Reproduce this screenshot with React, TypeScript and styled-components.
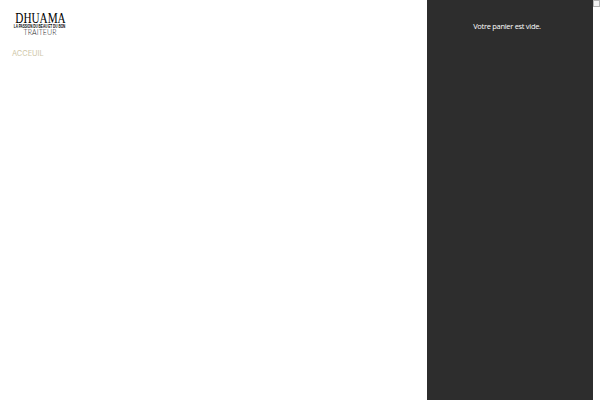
import React from 'react';
import styled, { createGlobalStyle } from 'styled-components';

const GlobalStyle = createGlobalStyle`
  html, body {
    margin: 0;
    padding: 0;
    background: #ffffff;
  }
`;

const Page = styled.div`
  display: flex;
  width: 600px;
  height: 400px;
  overflow: hidden;
  background: #ffffff;
`;

const Main = styled.div`
  flex: 0 0 427px;
  display: flex;
  flex-direction: column;
  align-items: flex-start;
  padding: 13px 0 0 12px;
  box-sizing: border-box;
`;

const Logo = styled.div`
  display: flex;
  flex-direction: column;
  align-items: center;
  width: 56px;
  color: #000000;
`;

const LogoName = styled.div`
  font-family: 'Liberation Serif', serif;
  font-size: 14px;
  line-height: 11px;
  transform: scaleX(0.8);
  white-space: nowrap;
`;

const LogoTagline = styled.div`
  font-family: 'Liberation Sans', sans-serif;
  font-size: 5px;
  font-weight: 700;
  line-height: 5px;
  transform: scaleX(0.62);
  white-space: nowrap;
`;

const LogoSub = styled.div`
  font-family: 'Lato', sans-serif;
  font-size: 7px;
  font-weight: 300;
  line-height: 7px;
  letter-spacing: 0.1px;
  color: #222222;
`;

const MenuLink = styled.a`
  margin-top: 12px;
  font-family: 'Inter', sans-serif;
  font-size: 7.4px;
  line-height: 11px;
  color: #cfc7a8;
`;

const Cart = styled.aside`
  flex: 0 0 166px;
  height: 100%;
  padding: 20px 6px 0 0;
  box-sizing: border-box;
  background: #2d2d2d;
  color: #ffffff;
  font-family: 'Open Sans', sans-serif;
  font-size: 7.5px;
  letter-spacing: -0.3px;
  line-height: 12px;
  text-align: center;
`;

const Corner = styled.div`
  flex: 0 0 7px;
  height: 7px;
  box-sizing: border-box;
  border: 1px solid #b5b5b5;
  background: #f4f4f4;
`;

export default function App() {
  return (
    <Page>
      <GlobalStyle />
      <Main>
        <Logo>
          <LogoName>DHUAMA</LogoName>
          <LogoTagline>LA PASSION DU BEAU ET DU BON</LogoTagline>
          <LogoSub>TRAITEUR</LogoSub>
        </Logo>
        <MenuLink>ACCEUIL</MenuLink>
      </Main>
      <Cart>Votre panier est vide.</Cart>
      <Corner />
    </Page>
  );
}
